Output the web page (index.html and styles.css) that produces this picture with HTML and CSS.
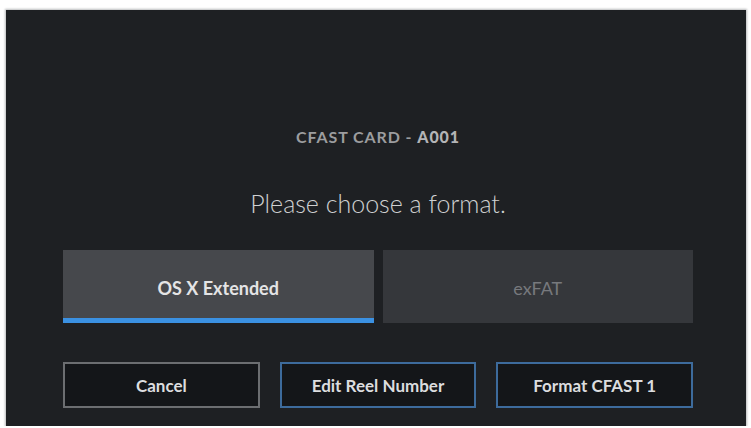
FILE: index.html
```html
<!DOCTYPE html>
<html lang="en">
<head>
    <meta charset="UTF-8">
    <meta name="viewport" content="width=device-width, initial-scale=1.0">
    <title>Format Card</title>
    <link rel="stylesheet" href="styles.css">
</head>
<body>
    <div class="pantalla">
        <div class="titulo">CFAST CARD - <b>A001</b></div>
        <div class="pregunta">Please choose a format.</div>
        <div class="formatos">
            <div class="formato activo">OS X Extended</div>
            <div class="formato">exFAT</div>
        </div>
        <div class="botones">
            <button class="boton gris">Cancel</button>
            <button class="boton">Edit Reel Number</button>
            <button class="boton">Format CFAST 1</button>
        </div>
    </div>
</body>
</html>
```

FILE: styles.css
```css
body {
    margin: 0;
    background-color: #ffffff;
    font-family: Lato, "Open Sans", sans-serif;
}

.pantalla {
    margin: 10px 0 0 6px;
    width: 740px;
    height: 416px;
    box-sizing: border-box;
    padding: 117px 53px 0 57px;
    background-color: #1e2023;
    box-shadow: 0 0 2px 1px #b9babc;
    display: flex;
    flex-direction: column;
    align-items: center;
}

.titulo {
    font-size: 16px;
    line-height: 20px;
    font-weight: 700;
    color: #9c9d9f;
    letter-spacing: 0.9px;
}

.titulo b {
    color: #b3b4b6;
}

.pregunta {
    margin-top: 40px;
    font-size: 25px;
    line-height: 32px;
    font-weight: 300;
    color: #cfd0d1;
}

.formatos {
    margin-top: 31px;
    width: 630px;
    display: flex;
    gap: 9px;
}

.formato {
    flex: 1;
    height: 73px;
    box-sizing: border-box;
    padding-top: 3px;
    display: flex;
    align-items: center;
    justify-content: center;
    background-color: #35373b;
    color: #77797d;
    font-size: 18px;
}

.formato.activo {
    background-color: #46484c;
    color: #e4e4e5;
    font-weight: 700;
    box-shadow: inset 0 -5px 0 #3b91e2;
}

.botones {
    margin-top: 39px;
    width: 630px;
    display: grid;
    grid-template-columns: repeat(3, 1fr);
    gap: 20px;
}

.boton {
    height: 46px;
    background-color: #141619;
    border: 2px solid #3d6b9c;
    color: #dcdddf;
    font-family: Lato, "Open Sans", sans-serif;
    font-size: 17px;
    font-weight: 700;
}

.boton.gris {
    border-color: #6c6e71;
}
```
